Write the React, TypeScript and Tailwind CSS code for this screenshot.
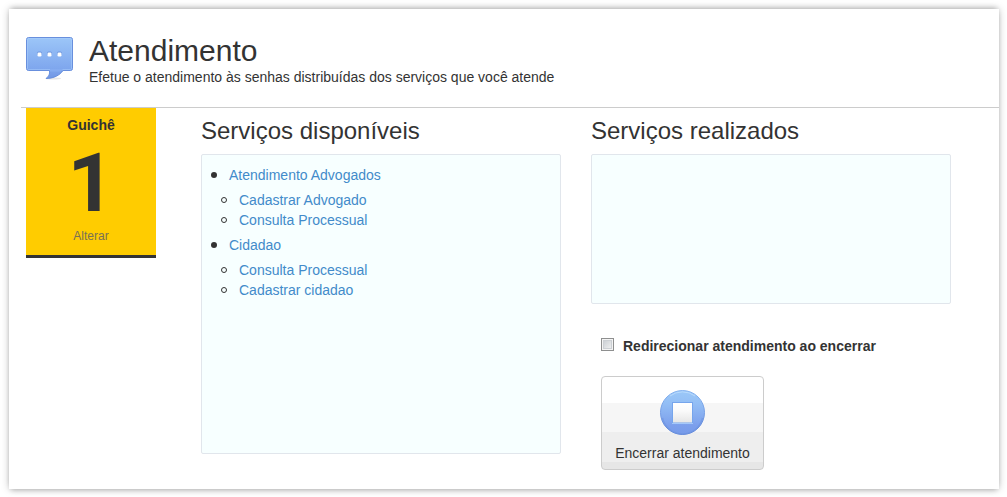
import { useId, useState } from "react";

type Service = { name: string; children: string[] };

const services: Service[] = [
  { name: "Atendimento Advogados", children: ["Cadastrar Advogado", "Consulta Processual"] },
  { name: "Cidadao", children: ["Consulta Processual", "Cadastrar cidadao"] },
];

function ChatIcon() {
  return (
    <svg className="h-[46px] w-[47px] shrink-0" viewBox="0 0 47 46" aria-hidden="true">
      <defs>
        <linearGradient id="chat-fill" x1="0" y1="0" x2="0" y2="1">
          <stop offset="0" stopColor="#9cc6f8" />
          <stop offset="0.75" stopColor="#7fa7ee" />
          <stop offset="1" stopColor="#7096e4" />
        </linearGradient>
      </defs>
      <ellipse cx="27" cy="41.5" rx="8" ry="1" fill="#e6e6e6" />
      <path
        d="M2.5 .5H44.5Q46.5 .5 46.5 2.5V31.5Q46.5 33.5 44.5 33.5H37C34 38 28 41.5 20 41.5C23 39.5 24 37 23.5 33.5H2.5Q.5 33.5 .5 31.5V2.5Q.5 .5 2.5 .5Z"
        fill="url(#chat-fill)"
        stroke="#688fdd"
      />
      <rect x="1.5" y="1.5" width="44" height="31" rx="1" fill="none" stroke="#a9cdfb" strokeOpacity="0.55" />
      <path d="M24 32H37L34.5 34.5H24Z" fill="#84abf0" />
      <g fill="#6d97e0">
        <rect x="11" y="14.5" width="5" height="4" rx="1.5" />
        <rect x="21" y="14.5" width="5" height="4" rx="1.5" />
        <rect x="31" y="14.5" width="5" height="4" rx="1.5" />
      </g>
      <g fill="#ffffff">
        <rect x="11.5" y="15.5" width="4" height="4" rx="1.3" />
        <rect x="21.5" y="15.5" width="4" height="4" rx="1.3" />
        <rect x="31.5" y="15.5" width="4" height="4" rx="1.3" />
      </g>
    </svg>
  );
}

function StopIcon() {
  return (
    <svg className="size-[46px]" viewBox="0 0 46 46" aria-hidden="true">
      <defs>
        <linearGradient id="stop-fill" x1="0" y1="0" x2="0" y2="1">
          <stop offset="0" stopColor="#9bc8f8" />
          <stop offset="0.3" stopColor="#93bef5" />
          <stop offset="0.8" stopColor="#7c9fec" />
          <stop offset="1" stopColor="#769ae9" />
        </linearGradient>
        <linearGradient id="stop-edge" x1="0" y1="0" x2="0" y2="1">
          <stop offset="0" stopColor="#86b3ef" />
          <stop offset="1" stopColor="#6288da" />
        </linearGradient>
        <linearGradient id="stop-square" x1="0" y1="0" x2="0" y2="1">
          <stop offset="0" stopColor="#ffffff" />
          <stop offset="0.4" stopColor="#fafafa" />
          <stop offset="1" stopColor="#e6e6e6" />
        </linearGradient>
      </defs>
      <circle cx="22.5" cy="22.5" r="22" fill="url(#stop-fill)" stroke="url(#stop-edge)" />
      <path d="M10 6A21 21 0 0 1 35 6" fill="none" stroke="#b8dafd" />
      <path d="M2.5 28A20.5 20.5 0 0 0 42.5 28" fill="none" stroke="#6d92df" strokeOpacity="0.6" strokeWidth="1.5" />
      <rect x="12" y="12" width="21" height="21.5" fill="#76a5ec" />
      <rect x="13" y="13" width="19" height="19.5" fill="url(#stop-square)" />
      <path d="M12 33.5H33" stroke="#a4c8fa" />
    </svg>
  );
}

function ServiceList() {
  return (
    <ul className="flex flex-col gap-[5px] pl-[9px]">
      {services.map((service) => (
        <li key={service.name}>
          <div className="flex items-center gap-3 before:size-[6px] before:rounded-full before:bg-[#333]">
            <a href="#" className="text-[#428bca] hover:underline">
              {service.name}
            </a>
          </div>
          <ul className="mt-[5px] pl-[10px]">
            {service.children.map((child) => (
              <li
                key={child}
                className="flex items-center gap-3 before:size-[6px] before:rounded-full before:border before:border-[#333]"
              >
                <a href="#" className="text-[#428bca] hover:underline">
                  {child}
                </a>
              </li>
            ))}
          </ul>
        </li>
      ))}
    </ul>
  );
}

export default function App() {
  const redirectId = useId();
  const [redirect, setRedirect] = useState(false);

  return (
    <div className="min-h-screen overflow-hidden bg-white pt-[9px] pr-2 pb-2 pl-[9px] font-['Liberation_Sans',Arial,sans-serif] text-sm leading-5 text-[#333]">
      <main className="bg-white pb-[19px] pl-3 shadow-[0_0_8px_rgba(0,0,0,0.22),0_-3px_5px_-2px_rgba(0,0,0,0.2),0_3px_5px_-2px_rgba(0,0,0,0.2)]">
        <header className="flex items-start gap-4 border-b border-[#ccc] pt-[25px] pb-5 pl-[5px]">
          <div className="pt-[3px]">
            <ChatIcon />
          </div>
          <div>
            <h1 className="text-3xl leading-[33px]">Atendimento</h1>
            <p>Efetue o atendimento às senhas distribuídas dos serviços que você atende</p>
          </div>
        </header>

        <div className="flex items-start pr-12 pl-[5px]">
          <aside className="mr-[45px] flex w-[130px] shrink-0 flex-col items-center border-b-3 border-[#333] bg-[#ffcc00] pt-[7px] pb-[9px]">
            <strong>Guichê</strong>
            <span className="pt-[6px] font-[Roboto,'Liberation_Sans',sans-serif] text-[82px] leading-[85px] font-bold">
              1
            </span>
            <a href="#" className="text-xs leading-5 text-[#777057] hover:underline">
              Alterar
            </a>
          </aside>

          <div className="grid flex-1 grid-cols-2 gap-[30px] pt-[10px]">
            <section>
              <h2 className="mb-[10px] text-2xl leading-[26px]">Serviços disponíveis</h2>
              <div className="min-h-[300px] rounded-xs border border-[#e1e6ec] bg-[#f7ffff] py-[10px]">
                <ServiceList />
              </div>
            </section>

            <section>
              <h2 className="mb-[10px] text-2xl leading-[26px]">Serviços realizados</h2>
              <div className="min-h-[150px] rounded-xs border border-[#e1e6ec] bg-[#f7ffff]" />

              <div className="mt-8 flex flex-col items-start gap-5 pl-[10px]">
                <div className="flex items-start gap-[9px]">
                  <input
                    id={redirectId}
                    type="checkbox"
                    checked={redirect}
                    onChange={(event) => setRedirect(event.target.checked)}
                    className="mt-[2px] size-[13px] appearance-none border border-[#8e8f8f] bg-linear-to-br from-[#c4c9ce] to-[#f6f6f6] shadow-[inset_0_0_0_1px_#f4f4f4,inset_0_0_0_2px_#ccd0d4] checked:from-[#428bca] checked:to-[#428bca]"
                  />
                  <label htmlFor={redirectId} className="font-bold">
                    Redirecionar atendimento ao encerrar
                  </label>
                </div>
                <button
                  type="button"
                  className="flex min-w-[163px] flex-col items-center gap-[7px] rounded border border-[#ccc] bg-[linear-gradient(#fff_0_26px,#f6f6f6_26px_55px,#eee_55px_85px,#e6e6e6_85px)] px-3 pt-[13px] pb-[6px]"
                >
                  <StopIcon />
                  <span>Encerrar atendimento</span>
                </button>
              </div>
            </section>
          </div>
        </div>
      </main>
    </div>
  );
}
